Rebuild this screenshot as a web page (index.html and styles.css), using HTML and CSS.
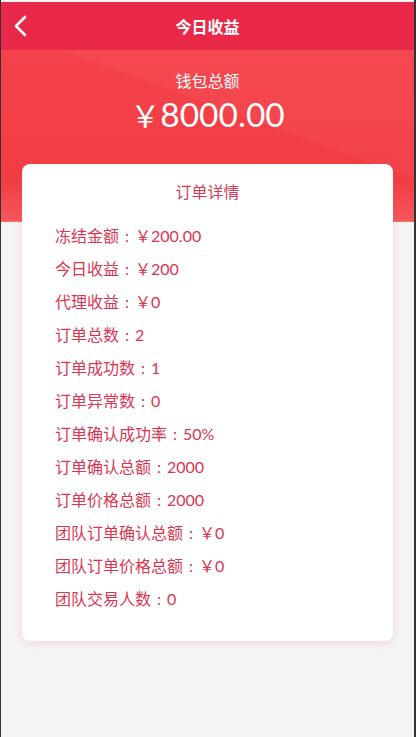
FILE: index.html
```html
<!DOCTYPE html>
<html lang="zh">
<head>
<meta charset="utf-8">
<title>今日收益</title>
<link rel="stylesheet" href="styles.css">
</head>
<body>
<div class="page">
  <header class="nav">
    <svg class="back" width="16" height="22" viewBox="0 0 16 22"><polyline points="12,2 3,11 12,20" fill="none" stroke="#fff" stroke-width="2.6" stroke-linecap="round" stroke-linejoin="round"/></svg>
    <h1 class="nav-title">今日收益</h1>
  </header>
  <section class="banner">
    <div class="banner-label">钱包总额</div>
    <div class="banner-amount"><span class="yen">￥</span>8000.00</div>
  </section>
  <section class="card">
    <h2 class="card-title">订单详情</h2>
    <ul class="list">
      <li>冻结金额<span class="colon">:</span>￥200.00</li>
      <li>今日收益<span class="colon">:</span>￥200</li>
      <li>代理收益<span class="colon">:</span>￥0</li>
      <li>订单总数<span class="colon">:</span>2</li>
      <li>订单成功数<span class="colon">:</span>1</li>
      <li>订单异常数<span class="colon">:</span>0</li>
      <li>订单确认成功率<span class="colon">:</span>50%</li>
      <li>订单确认总额<span class="colon">:</span>2000</li>
      <li>订单价格总额<span class="colon">:</span>2000</li>
      <li>团队订单确认总额<span class="colon">:</span>￥0</li>
      <li>团队订单价格总额<span class="colon">:</span>￥0</li>
      <li>团队交易人数<span class="colon">:</span>0</li>
    </ul>
  </section>
</div>
</body>
</html>
```

FILE: styles.css
```css
html, body {
  margin: 0;
  padding: 0;
}
body {
  background: #333;
  font-family: Lato, "Noto Sans CJK SC", sans-serif;
}
.page {
  box-sizing: border-box;
  height: 737px;
  margin: 0 2px 0 1px;
  padding-top: 2px;
  background: #f5f4f5;
  overflow: hidden;
}
.nav {
  position: relative;
  height: 48px;
  background: #e9284a;
  display: flex;
  align-items: center;
  justify-content: center;
}
.back {
  position: absolute;
  left: 12px;
  top: 13px;
}
.nav-title {
  margin: 0;
  color: #fff;
  font-size: 16px;
  font-weight: 700;
}
.banner {
  box-sizing: border-box;
  height: 172px;
  padding-top: 20px;
  text-align: center;
  color: #fff;
  border-bottom: 1px solid #f6784f;
  background:
    linear-gradient(to bottom, transparent 76%, rgba(255,130,140,0.4) 100%),
    linear-gradient(200deg, rgba(255,255,255,0.035) 0 40%, transparent 40%),
    linear-gradient(#f5424b, #f13a40);
}
.banner-label {
  font-size: 16px;
  line-height: 22px;
}
.banner-amount {
  margin-top: 2px;
  font-size: 33.5px;
  line-height: 40px;
}
.yen {
  font-family: "Noto Sans CJK SC", sans-serif;
  font-size: 30px;
}
.card {
  position: relative;
  margin: -58px 21px 0 21px;
  padding: 16px 0 26px 33px;
  background: #fff;
  border-radius: 8px;
  box-shadow: 0 2px 10px rgba(240, 80, 100, 0.18);
}
.card-title {
  margin: 0 0 15px -33px;
  text-align: center;
  font-size: 16px;
  font-weight: 400;
  line-height: 24px;
  color: #d63a55;
}
.list {
  list-style: none;
  margin: 0;
  padding: 0;
}
.list li {
  font-size: 16px;
  line-height: 33px;
  color: #dc3550;
}
.colon {
  display: inline-block;
  width: 16px;
  text-align: center;
}
```
